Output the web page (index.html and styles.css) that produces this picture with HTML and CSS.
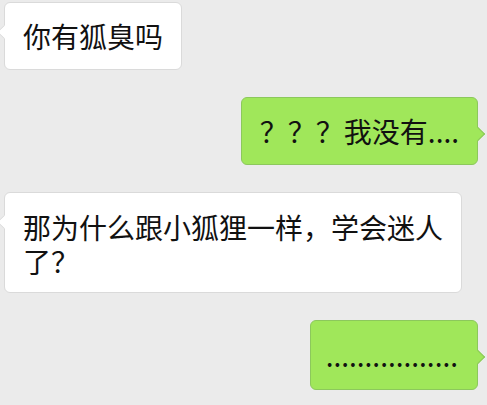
FILE: index.html
```html
<!DOCTYPE html>
<html>
<head>
  <meta charset="utf-8">
  <link rel="stylesheet" href="styles.css">
</head>
<body>
  <div class="chat">
    <div class="row left">
      <div class="bubble white">你有狐臭吗</div>
    </div>
    <div class="row right">
      <div class="bubble green">？？？我没有....</div>
    </div>
    <div class="row left">
      <div class="bubble white wide">那为什么跟小狐狸一样，学会迷人了？</div>
    </div>
    <div class="row right">
      <div class="bubble green dots">.................</div>
    </div>
  </div>
</body>
</html>
```
FILE: styles.css
```css
body {
  margin: 0;
  background-color: #ebebeb;
  font-family: "Noto Sans CJK SC", "Noto Sans", sans-serif;
  color: #111;
}
.chat {
  display: flex;
  flex-direction: column;
  gap: 27px;
  padding: 2px 9px 0 4px;
}
.row {
  display: flex;
}
.row.right {
  justify-content: flex-end;
}
.bubble {
  position: relative;
  font-size: 28px;
  line-height: 34px;
  padding: 16px 18px;
  border-radius: 6px;
}
.white {
  background-color: #fff;
  border: 1px solid #dadada;
}
.green {
  background-color: #a0e75a;
  border: 1px solid #8cc85c;
}
.wide {
  width: 420px;
  padding-top: 17px;
  padding-bottom: 14px;
}
.dots {
  padding: 17px 19px 17px 15px;
}
.bubble::before {
  content: "";
  position: absolute;
  width: 9px;
  height: 9px;
  transform: rotate(45deg);
}
.white::before {
  left: -6px;
  top: 24px;
  background-color: #fff;
  border-left: 1px solid #dadada;
  border-bottom: 1px solid #dadada;
}
.green::before {
  right: -6px;
  top: 31px;
  background-color: #a0e75a;
  border-right: 1px solid #8cc85c;
  border-top: 1px solid #8cc85c;
}
```
